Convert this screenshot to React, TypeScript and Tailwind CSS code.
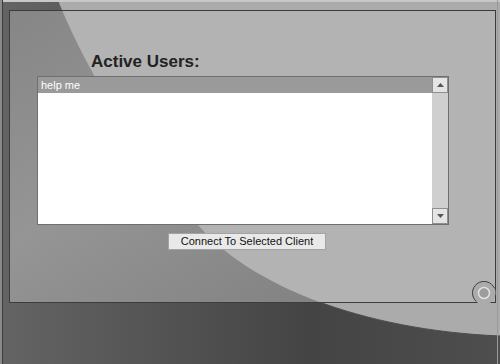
import { useState } from "react"

const users = ["help me"]

function Backdrop() {
  return (
    <svg className="absolute inset-0" width="500" height="364" viewBox="0 0 500 364">
      <defs>
        <linearGradient id="outerDark" x1="0" y1="0" x2="1" y2="0">
          <stop offset="0" stopColor="#646464" />
          <stop offset="0.62" stopColor="#444444" />
          <stop offset="1" stopColor="#4e4e4e" />
        </linearGradient>
      </defs>
      <rect x="0" y="0" width="500" height="364" fill="url(#outerDark)" />
      <path d="M58,0 C75,45 130,150 198,225 C250,285 360,330 500,336 L500,0 Z" fill="#ababab" />
      <path d="M198,225 C250,285 360,330 500,336" fill="none" stroke="#4c4c4c" strokeWidth="1" />
      <rect x="0" y="0" width="500" height="2" fill="#c8c8c8" />
      <rect x="0" y="0" width="2" height="364" fill="#8a8a8a" />
      <rect x="2" y="0" width="1" height="364" fill="#3c3c3c" />
      <rect x="497" y="0" width="1" height="364" fill="#9a9a9a" />
    </svg>
  )
}

function PanelShade() {
  return (
    <svg className="absolute inset-0" width="485" height="291" viewBox="0 0 485 291">
      <defs>
        <linearGradient id="panelDark" x1="0" y1="0" x2="1" y2="1">
          <stop offset="0" stopColor="#868686" />
          <stop offset="0.4" stopColor="#959595" />
          <stop offset="1" stopColor="#7a7a7a" />
        </linearGradient>
      </defs>
      <rect x="0" y="0" width="485" height="291" fill="url(#panelDark)" />
      <path d="M48,-11 C65,34 120,139 188,214 C240,274 350,319 490,325 L490,-11 Z" fill="#b3b3b3" />
    </svg>
  )
}

function CornerKnob() {
  return (
    <svg className="absolute left-[460px] top-[270px]" width="40" height="45" viewBox="460 270 40 45">
      <circle cx="484" cy="293" r="11.5" fill="#ababab" />
      <path d="M476.3,301.5 A11.5,11.5 0 1,1 494.5,288.3" fill="none" stroke="#3c3c3c" strokeWidth="1" />
      <circle cx="484" cy="293" r="5.5" fill="#9c9c9c" stroke="#e2e2e2" strokeWidth="1.5" />
    </svg>
  )
}

function ScrollButton({ dir }: { dir: "up" | "down" }) {
  return (
    <div className="w-[16px] h-[16px] bg-[#e4e4e4] border border-[#8f8f8f] flex items-center justify-center">
      <svg width="7" height="4" viewBox="0 0 7 4">
        {dir === "up" ? (
          <path d="M0,4 L3.5,0 L7,4 Z" fill="#555" />
        ) : (
          <path d="M0,0 L3.5,4 L7,0 Z" fill="#555" />
        )}
      </svg>
    </div>
  )
}

export default function App() {
  const [selected, setSelected] = useState(0)

  return (
    <div
      className="relative w-[500px] h-[364px] overflow-hidden pl-[9px] pt-[10px]"
      style={{ fontFamily: '"Liberation Sans", Arial, sans-serif' }}
    >
      <Backdrop />

      <div className="relative w-[487px] h-[293px] border border-[#3c3c3c]">
        <PanelShade />

        <div className="relative flex flex-col">
          <h1 className="ml-[81px] mt-[41px] text-[17px] leading-[20px] font-bold text-[#222]">
            Active Users:
          </h1>

          <div className="ml-[27px] mt-[4px] w-[412px] h-[149px] border border-[#6f6f6f] bg-white flex">
            <div className="flex-1 flex flex-col">
              {users.map((u, i) => (
                <div
                  key={u}
                  onClick={() => setSelected(i)}
                  className={
                    i === selected
                      ? "h-[16px] pl-[3px] bg-[#9a9a9a] text-white text-[11px] leading-[16px]"
                      : "h-[16px] pl-[3px] text-[#111] text-[11px] leading-[16px]"
                  }
                >
                  {u}
                </div>
              ))}
            </div>
            <div className="w-[16px] bg-[#cfcfcf] flex flex-col justify-between">
              <ScrollButton dir="up" />
              <ScrollButton dir="down" />
            </div>
          </div>

          <button className="ml-[158px] mt-[8px] w-[158px] h-[17px] bg-[#e9e9e9] border border-[#a3a3a3] text-[11px] leading-[15px] text-[#111]">
            Connect To Selected Client
          </button>
        </div>
      </div>

      <CornerKnob />
    </div>
  )
}
